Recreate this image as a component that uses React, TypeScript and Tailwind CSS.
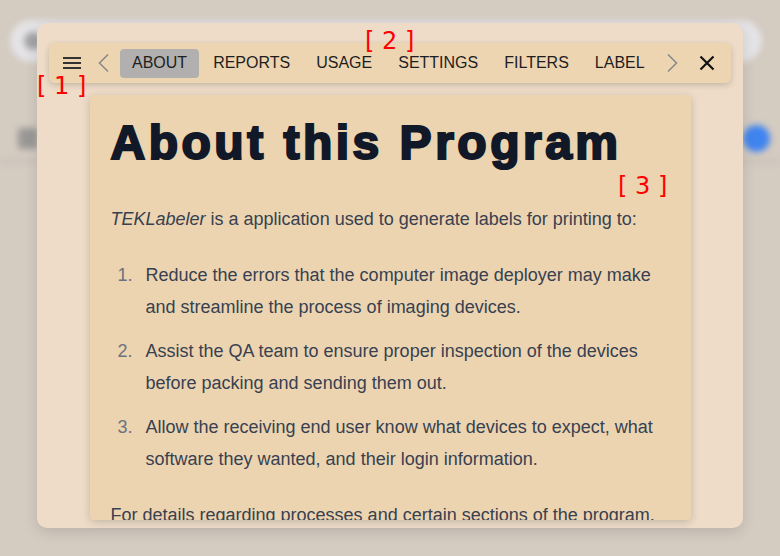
import React from 'react';

const tabs = ['ABOUT', 'REPORTS', 'USAGE', 'SETTINGS', 'FILTERS', 'LABEL'];

const goals = [
  'Reduce the errors that the computer image deployer may make and streamline the process of imaging devices.',
  'Assist the QA team to ensure proper inspection of the devices before packing and sending them out.',
  'Allow the receiving end user know what devices to expect, what software they wanted, and their login information.',
];

function Backdrop() {
  // the app behind the dialog, blurred out
  return (
    <div className="absolute inset-0 blur-[3px]">
      <div className="mx-[18px] ml-[10px] mt-5 flex h-[42px] items-center rounded-full bg-[#e4e3e6] pl-[14px]">
        <div className="h-[18px] w-[18px] rounded-full bg-[#a3a3a6]" />
      </div>
      <div className="mt-[63px] flex items-center justify-between pl-[18px] pr-[10px]">
        <div className="h-[21px] w-[20px] rounded-sm bg-[#9a9896]" />
        <div className="h-[27px] w-[27px] rounded-full bg-[#3f84ef]" />
      </div>
      <div className="mt-2 h-[3px] bg-[#c8bfb6]" />
    </div>
  );
}

function Toolbar() {
  return (
    <div className="flex h-10 shrink-0 items-center rounded-md bg-[#eed5b2] pl-[13px] text-[16px] text-[#1e1e1e] shadow-[0_2px_6px_rgba(0,0,0,0.18)]">
      <svg width="20" height="20" viewBox="0 0 20 20" className="shrink-0">
        <path d="M1 5h18M1 10h18M1 15h18" stroke="#333" strokeWidth="2" />
      </svg>
      <svg width="12" height="20" viewBox="0 0 12 20" className="ml-[15px] shrink-0">
        <path d="M11 1.5 2.5 10 11 18.5" fill="none" stroke="#8a8a8a" strokeWidth="1.6" />
      </svg>
      <div className="ml-[11px] flex items-center gap-0.5">
        {tabs.map((t, i) => (
          <div
            key={t}
            className={
              i === 0
                ? 'flex h-[29px] items-center rounded-[4px] bg-[#b1b0af] px-3 leading-6'
                : 'flex h-[29px] items-center px-3 leading-6'
            }
          >
            {t}
          </div>
        ))}
      </div>
      <svg width="12" height="20" viewBox="0 0 12 20" className="ml-[10px] shrink-0">
        <path d="M1 1.5 9.5 10 1 18.5" fill="none" stroke="#8a8a8a" strokeWidth="1.6" />
      </svg>
      <svg width="16" height="16" viewBox="0 0 16 16" className="ml-[20px] shrink-0">
        <path d="M1.5 1.5l13 13M14.5 1.5l-13 13" stroke="#111" strokeWidth="2.2" />
      </svg>
    </div>
  );
}

function AboutCard() {
  return (
    <div className="mx-auto mt-3 w-[601px] flex-1 overflow-hidden rounded bg-[#edd4b0] px-[21px] pt-[24px] shadow-[0_2px_8px_rgba(0,0,0,0.18)]">
      <h1 className="mb-[36px] text-[48px] font-bold leading-none tracking-[3.5px] text-[#111827] [-webkit-text-stroke:2.2px_#111827]">
        About this Program
      </h1>
      <div className="text-[18px] leading-8 text-[#374151]">
        <p>
          <em>TEKLabeler</em> is a application used to generate labels for printing to:
        </p>
        <ol className="my-6 list-decimal pl-[27px] marker:text-[#6b7280]">
          {goals.map((g) => (
            <li key={g} className="my-3 pl-2">
              {g}
            </li>
          ))}
        </ol>
        <p>
          For details regarding processes and certain sections of the program, refer to the
          other tabs.
        </p>
      </div>
    </div>
  );
}

function Marker({ n, className }: { n: number; className: string }) {
  return (
    <div
      className={`absolute font-['DejaVu_Sans',sans-serif] text-[24px] leading-none whitespace-pre text-[#ff0000] ${className}`}
    >
      {`[ ${n} ]`}
    </div>
  );
}

export default function App() {
  return (
    <div className="relative h-[556px] w-[780px] overflow-hidden bg-[#d4cbc1] font-['Liberation_Sans',Arial,sans-serif]">
      <Backdrop />
      <div className="absolute inset-0 flex justify-center pt-[23px]">
        <div className="flex h-[505px] w-[706px] flex-col rounded-[10px] bg-[#eedcc8] px-3 pt-5 pb-2 shadow-[0_4px_14px_rgba(0,0,0,0.12)]">
          <Toolbar />
          <AboutCard />
        </div>
      </div>
      <Marker n={1} className="left-[37px] top-[74px]" />
      <Marker n={2} className="left-[365px] top-[29px]" />
      <Marker n={3} className="left-[618px] top-[174px]" />
    </div>
  );
}
